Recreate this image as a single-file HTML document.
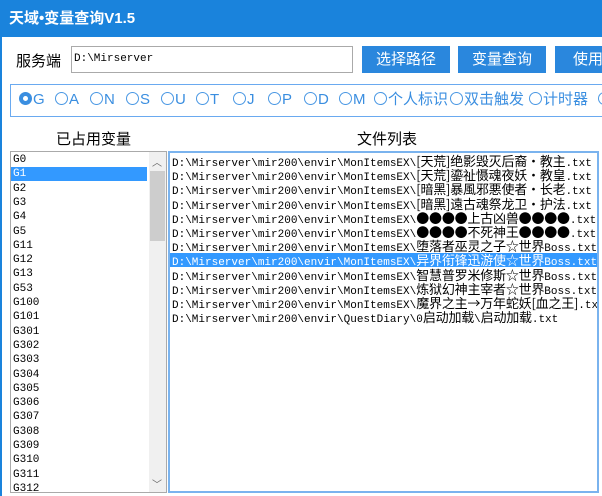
<!DOCTYPE html>
<html><head><meta charset="utf-8"><style>
*{margin:0;padding:0;box-sizing:border-box}
body{width:602px;height:496px;overflow:hidden;background:#fff;position:relative;font-family:"Liberation Sans","Noto Sans CJK SC",sans-serif;}
.a{position:absolute}
#title{left:0;top:0;width:602px;height:37px;background:#1a83dc;color:#fff;font-size:15px;font-weight:bold;line-height:37px;padding-left:9px}
#lb{left:0;top:37px;width:2px;height:459px;background:#1a83dc}
.btn{top:46px;height:27px;width:88px;background:#2a87dd;color:#fff;font-size:15px;text-align:center;line-height:27px}
.r{top:91px;font-size:15px;color:#3a8ee0;line-height:18px;white-space:nowrap}
.r i{display:inline-block;width:13px;height:13px;border:1.5px solid #4a98e4;border-radius:50%;vertical-align:-1px;margin-right:1px}
.r i.on{border:4px solid #3a8ee0;background:#fff}
.mono{font-family:"Liberation Mono","Noto Sans CJK SC",monospace;font-size:11px;}
.row{position:absolute;left:2px;height:14px;line-height:14px;white-space:nowrap;color:#000}
.row b{font-weight:normal;font-size:13px;font-family:"Noto Sans CJK SC",sans-serif;letter-spacing:-0.2px}
.sel{background:#3399ff;color:#fff}
</style></head><body>
<div class="a" id="title">天域•变量查询V1.5</div>
<div class="a" id="lb"></div>
<div class="a" style="left:16px;top:50px;font-size:15px;">服务端</div>
<div class="a" style="left:71px;top:46px;width:282px;height:27px;border:1px solid #aaa;"></div>
<div class="a mono" style="left:74px;top:53px;font-size:11px;">D:\Mirserver</div>
<div class="a btn" style="left:362px">选择路径</div>
<div class="a btn" style="left:458px">变量查询</div>
<div class="a btn" style="left:555px;width:60px;text-align:left;padding-left:18px">使用说明</div>
<div class="a" style="left:10px;top:84px;width:600px;height:33px;border:1.5px solid #6aaaf0"></div>
<div class="a r" style="left:19px"><i class="on"></i>G</div>
<div class="a r" style="left:55px"><i></i>A</div>
<div class="a r" style="left:90px"><i></i>N</div>
<div class="a r" style="left:126px"><i></i>S</div>
<div class="a r" style="left:161px"><i></i>U</div>
<div class="a r" style="left:196px"><i></i>T</div>
<div class="a r" style="left:233px"><i></i>J</div>
<div class="a r" style="left:268px"><i></i>P</div>
<div class="a r" style="left:304px"><i></i>D</div>
<div class="a r" style="left:339px"><i></i>M</div>
<div class="a r" style="left:374px"><i></i>个人标识</div>
<div class="a r" style="left:450px"><i></i>双击触发</div>
<div class="a r" style="left:529px"><i></i>计时器</div>
<div class="a r" style="left:598px"><i></i></div>
<div class="a" style="left:56px;top:128px;font-size:15px;">已占用变量</div>
<div class="a" style="left:357px;top:128px;font-size:15px;">文件列表</div>
<div class="a" style="left:10px;top:151px;width:157px;height:342px;border:1px solid #aaa;overflow:hidden">
<div class="a" style="right:0;top:0;width:17px;height:340px;background:#f0f0f0"></div>
<div class="a" style="right:1px;top:19px;width:15px;height:70px;background:#cdcdcd"></div>
<div class="a" style="right:4px;top:2px;font-size:10px;color:#666">︿</div>
<div class="a" style="right:4px;top:324px;font-size:10px;color:#666">﹀</div>
<div class="mono" style="position:absolute;left:0;top:1px;width:138px;font-size:11px">
<div class="row" style="top:0">G0</div>
<div class="row sel" style="top:14.3px;width:136px;left:0;padding-left:2px">G1</div>
<div class="row" style="top:28.6px">G2</div><div class="row" style="top:42.9px">G3</div>
<div class="row" style="top:57.2px">G4</div><div class="row" style="top:71.5px">G5</div>
<div class="row" style="top:85.8px">G11</div><div class="row" style="top:100.1px">G12</div>
<div class="row" style="top:114.4px">G13</div><div class="row" style="top:128.7px">G53</div>
<div class="row" style="top:143px">G100</div><div class="row" style="top:157.3px">G101</div>
<div class="row" style="top:171.6px">G301</div><div class="row" style="top:185.9px">G302</div>
<div class="row" style="top:200.2px">G303</div><div class="row" style="top:214.5px">G304</div>
<div class="row" style="top:228.8px">G305</div><div class="row" style="top:243.1px">G306</div>
<div class="row" style="top:257.4px">G307</div><div class="row" style="top:271.7px">G308</div>
<div class="row" style="top:286px">G309</div><div class="row" style="top:300.3px">G310</div>
<div class="row" style="top:314.6px">G311</div><div class="row" style="top:328.9px">G312</div>
</div></div>
<div class="a" style="left:168px;top:151px;width:431px;height:342px;border:2px solid #7ab3ee;overflow:hidden">
<div class="mono" style="position:absolute;left:0;top:1px;width:427px">
<div class="row" style="top:0">D:\Mirserver\mir200\envir\MonItemsEX\<b>[天荒]绝影毁灭后裔·教主</b>.txt</div>
<div class="row" style="top:14.2px">D:\Mirserver\mir200\envir\MonItemsEX\<b>[天荒]鎏祉慑魂夜妖·教皇</b>.txt</div>
<div class="row" style="top:28.4px">D:\Mirserver\mir200\envir\MonItemsEX\<b>[暗黑]暴風邪悪使者·长老</b>.txt</div>
<div class="row" style="top:42.6px">D:\Mirserver\mir200\envir\MonItemsEX\<b>[暗黑]遠古魂祭龙卫·护法</b>.txt</div>
<div class="row" style="top:56.8px">D:\Mirserver\mir200\envir\MonItemsEX\<b>●●●●上古凶兽●●●●</b>.txt</div>
<div class="row" style="top:71px">D:\Mirserver\mir200\envir\MonItemsEX\<b>●●●●不死神王●●●●</b>.txt</div>
<div class="row" style="top:85.2px">D:\Mirserver\mir200\envir\MonItemsEX\<b>堕落者巫灵之子☆世界</b>Boss.txt</div>
<div class="row sel" style="top:99.4px;left:0;width:427px;padding-left:2px">D:\Mirserver\mir200\envir\MonItemsEX\<b>异界衔锋迅游使☆世界</b>Boss.txt</div>
<div class="row" style="top:113.6px">D:\Mirserver\mir200\envir\MonItemsEX\<b>智慧普罗米修斯☆世界</b>Boss.txt</div>
<div class="row" style="top:127.8px">D:\Mirserver\mir200\envir\MonItemsEX\<b>炼狱幻神主宰者☆世界</b>Boss.txt</div>
<div class="row" style="top:142px">D:\Mirserver\mir200\envir\MonItemsEX\<b>魔界之主→万年蛇妖[血之王]</b>.txt</div>
<div class="row" style="top:156.2px">D:\Mirserver\mir200\envir\QuestDiary\0<b>启动加载</b>\<b>启动加载</b>.txt</div>
</div></div>
</body></html>
